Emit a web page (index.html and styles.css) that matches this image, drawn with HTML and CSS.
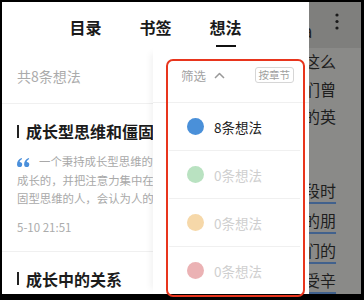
FILE: index.html
```html
<!DOCTYPE html>
<html lang="zh">
<head>
<meta charset="utf-8">
<link rel="stylesheet" href="styles.css">
</head>
<body>
<div class="frame">
  <div class="panel">
    <nav class="tabs">
      <span class="tab">目录</span>
      <span class="tab">书签</span>
      <span class="tab active">想法</span>
    </nav>
    <div class="sub">共8条想法</div>
    <div class="list">
      <div class="item">
        <div class="title"><span class="bar"></span>成长型思维和僵固型思维</div>
        <div class="quote">
          <div class="qline"><svg class="qicon" width="13" height="9" viewBox="0 0 13 9"><path d="M0 6.5C0 3.4 1.7 1.1 4.6 0l.5.9C3.5 1.7 2.7 2.9 2.6 3.9A2.6 2.6 0 1 1 0 6.5Z"/><path d="M7.1 6.5C7.1 3.4 8.8 1.1 11.7 0l.5.9C10.6 1.7 9.8 2.9 9.7 3.9A2.6 2.6 0 1 1 7.1 6.5Z"/></svg>一个秉持成长型思维的人，相信人是可以</div>
          <div class="qline">成长的，并把注意力集中在学习和进步上；</div>
          <div class="qline">固型思维的人，会认为人的能力是固定的</div>
        </div>
        <div class="date">5-10 21:51</div>
      </div>
      <div class="item">
        <div class="title"><span class="bar"></span>成长中的关系</div>
      </div>
    </div>
    <div class="dropdown">
      <div class="dhead">
        <span class="filter">筛选</span>
        <svg class="chev" width="11" height="7" viewBox="0 0 11 7"><polyline points="1,6 5.5,1.5 10,6"/></svg>
        <span class="bychap">按章节</span>
      </div>
      <div class="opts">
        <div class="opt"><span class="dot blue"></span><span class="olabel on">8条想法</span></div>
        <div class="opt"><span class="dot green"></span><span class="olabel">0条想法</span></div>
        <div class="opt"><span class="dot orange"></span><span class="olabel">0条想法</span></div>
        <div class="opt"><span class="dot pink"></span><span class="olabel">0条想法</span></div>
      </div>
    </div>
  </div>
  <div class="side">
    <div class="stop">
      <span class="aa">Aa</span>
      <svg class="more" width="4" height="18" viewBox="0 0 4 18"><circle cx="2" cy="2" r="1.6"/><circle cx="2" cy="8.5" r="1.6"/><circle cx="2" cy="15" r="1.6"/></svg>
    </div>
    <div class="para p1">
      <div class="sl">这么</div>
      <div class="sl">们曾</div>
      <div class="sl">的英</div>
    </div>
    <div class="para p2">
      <div class="sl"><u>段时</u></div>
      <div class="sl"><u>的朋</u></div>
      <div class="sl"><u>们的</u></div>
      <div class="sl"><u>受辛</u></div>
    </div>
  </div>
  <div class="annot"></div>
</div>
</body>
</html>
```
FILE: styles.css
```css
html, body {
  margin: 0;
  padding: 0;
}
body {
  background: #000;
  width: 364px;
  height: 300px;
  overflow: hidden;
  font-family: "Noto Sans CJK SC", "Noto Sans", sans-serif;
}
.frame {
  position: relative;
  display: flex;
  margin: 2px 3px 0 2px;
  height: 292px;
}
.panel {
  position: relative;
  width: 307px;
  flex: none;
  background: #fff;
  overflow: hidden;
}
.tabs {
  height: 46px;
  box-sizing: border-box;
  padding-top: 3px;
  display: flex;
  justify-content: center;
  align-items: center;
  gap: 38px;
}
.tab {
  position: relative;
  font-size: 16px;
  line-height: 22px;
  font-weight: 700;
  color: #1a1a1a;
}
.tab.active::after {
  content: "";
  position: absolute;
  left: 6px;
  top: 29px;
  width: 20px;
  height: 2px;
  background: #111;
}
.sub {
  height: 56px;
  box-sizing: border-box;
  display: flex;
  align-items: center;
  padding-left: 15px;
  font-size: 14px;
  color: #ababab;
  border-bottom: 1px solid #f0f0f0;
}
.item {
  padding: 16px 0 15px 15px;
  border-bottom: 1px solid #f0f0f0;
}
.title {
  display: flex;
  align-items: center;
  font-size: 16px;
  line-height: 22px;
  font-weight: 700;
  color: #1c1c1c;
  white-space: nowrap;
}
.bar {
  width: 2px;
  height: 13px;
  background: #222;
  margin-right: 7px;
}
.quote {
  margin-top: 10px;
  font-size: 11.4px;
  line-height: 18.5px;
  color: #a9a9a9;
}
.qline {
  white-space: nowrap;
}
.qicon {
  fill: #4a8fdb;
  margin-right: 9px;
  vertical-align: -1px;
}
.date {
  margin-top: 10px;
  font-size: 11.5px;
  line-height: 18px;
  color: #ababab;
}
.dropdown {
  position: absolute;
  left: 151px;
  top: 46px;
  right: 0;
  bottom: 0;
  background: #fff;
  box-shadow: -7px 0 7px -5px rgba(0, 0, 0, 0.06);
}
.dhead {
  height: 55px;
  box-sizing: border-box;
  display: flex;
  align-items: center;
  padding: 0 15px 0 28px;
  border-bottom: 1px solid #f0f0f0;
}
.filter {
  font-size: 12.5px;
  color: #a3a3a3;
}
.chev {
  margin-left: 8px;
  fill: none;
  stroke: #999;
  stroke-width: 1.5;
  stroke-linejoin: round;
}
.bychap {
  margin-left: auto;
  font-size: 10.5px;
  line-height: 14px;
  color: #a0a0a0;
  border: 1px solid #d6d6d6;
  border-radius: 3px;
  padding: 0 3px;
}
.opts {
  margin: 0 9px 0 16px;
}
.opt {
  height: 47px;
  display: flex;
  align-items: center;
  padding-left: 18px;
  border-bottom: 1px solid #f0f0f0;
}
.opt:last-child {
  border-bottom: none;
}
.dot {
  width: 17px;
  height: 17px;
  border-radius: 50%;
  margin-right: 10px;
}
.blue { background: #4a90d9; }
.green { background: #b9e2c1; }
.orange { background: #f6d8a9; }
.pink { background: #ebb2b4; }
.olabel {
  font-size: 13.5px;
  color: #cfcfcf;
}
.olabel.on {
  color: #222;
}
.side {
  flex: 1;
  background: #8a8a88;
  overflow: hidden;
  color: #1e1e1e;
}
.stop {
  height: 46px;
  background: #7f7f7d;
  display: flex;
  align-items: center;
}
.aa {
  font-size: 17px;
  margin-left: -17px;
  margin-top: 10px;
  color: #1e1e1e;
}
.more {
  fill: #1a1a1a;
  margin-left: 23px;
  margin-top: -6px;
}
.para {
  font-size: 16px;
  margin-left: -5px;
  white-space: nowrap;
}
.p1 {
  line-height: 27.5px;
}
.p2 {
  margin-top: 44px;
  line-height: 30px;
}
.p2 u {
  text-decoration: underline;
  text-decoration-color: #41618d;
  text-decoration-thickness: 1.5px;
  text-underline-offset: 5px;
}
.annot {
  position: absolute;
  left: 164px;
  top: 57px;
  width: 139px;
  height: 238px;
  box-sizing: border-box;
  border: 2.5px solid #e8351d;
  border-radius: 7px;
}
```
